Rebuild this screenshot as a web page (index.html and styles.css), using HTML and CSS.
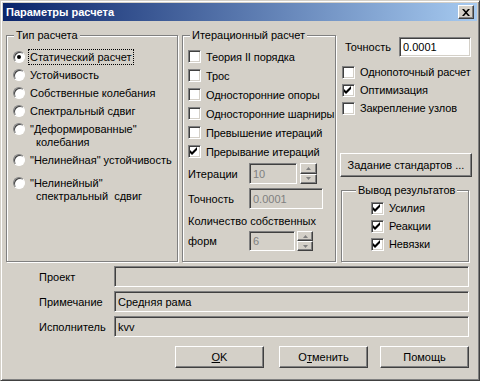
FILE: index.html
```html
<!DOCTYPE html>
<html lang="ru">
<head>
    <meta charset="UTF-8">
    <title>Параметры расчета</title>
    <link rel="stylesheet" href="styles.css">
</head>
<body>
    <div class="window">
        <div class="titlebar">
            <span class="title">Параметры расчета</span>
            <span class="close-btn">
                <svg width="8" height="7" viewBox="0 0 8 7"><path d="M0 0h2l2 2.3 2-2.3h2l-3 3.5 3 3.5h-2l-2-2.3-2 2.3h-2l3-3.5z" fill="#000"/></svg>
            </span>
        </div>
        <div class="content">
            <div class="top">
                <!-- Тип расчета -->
                <div class="group group-type">
                    <span class="group-title">Тип расчета</span>
                    <div class="opt"><span class="radio checked"></span><span class="focus">Статический расчет</span></div>
                    <div class="opt"><span class="radio"></span><span>Устойчивость</span></div>
                    <div class="opt"><span class="radio"></span><span>Собственные колебания</span></div>
                    <div class="opt"><span class="radio"></span><span>Спектральный сдвиг</span></div>
                    <div class="opt"><span class="radio"></span><span>"Деформированные"<span class="line2">колебания</span></span></div>
                    <div class="opt"><span class="radio"></span><span>"Нелинейная" устойчивость</span></div>
                    <div class="opt opt-last"><span class="radio"></span><span>"Нелинейный"<span class="line2">спектральный&nbsp; сдвиг</span></span></div>
                </div>

                <!-- Итерационный расчет -->
                <div class="group group-iter">
                    <span class="group-title">Итерационный расчет</span>
                    <div class="check-row"><span class="checkbox"></span>Теория II порядка</div>
                    <div class="check-row"><span class="checkbox"></span>Трос</div>
                    <div class="check-row"><span class="checkbox"></span>Односторонние опоры</div>
                    <div class="check-row"><span class="checkbox"></span>Односторонние шарниры</div>
                    <div class="check-row"><span class="checkbox"></span>Превышение итераций</div>
                    <div class="check-row"><span class="checkbox checked"><svg width="11" height="11" viewBox="0 0 11 11"><path d="M1 4l2 2 5-5v3l-5 5-2-2z" fill="#000"/></svg></span>Прерывание итераций</div>
                    <div class="num-row row-iter">
                        <span class="num-label">Итерации</span>
                        <span class="field disabled w-iter">10</span>
                        <span class="spinner">
                            <span class="spin-btn"><svg width="5" height="3" viewBox="0 0 5 3"><path d="M2.5 0l2.5 3h-5z" fill="#808080"/></svg></span>
                            <span class="spin-btn"><svg width="5" height="3" viewBox="0 0 5 3"><path d="M0 0h5l-2.5 3z" fill="#808080"/></svg></span>
                        </span>
                    </div>
                    <div class="num-row row-acc">
                        <span class="num-label">Точность</span>
                        <span class="field disabled w-acc">0.0001</span>
                    </div>
                    <div class="modes-label">Количество собственных</div>
                    <div class="num-row row-forms">
                        <span class="num-label">форм</span>
                        <span class="field disabled w-forms">6</span>
                        <span class="spinner spinner-sm">
                            <span class="spin-btn"><svg width="5" height="3" viewBox="0 0 5 3"><path d="M2.5 0l2.5 3h-5z" fill="#808080"/></svg></span>
                            <span class="spin-btn"><svg width="5" height="3" viewBox="0 0 5 3"><path d="M0 0h5l-2.5 3z" fill="#808080"/></svg></span>
                        </span>
                    </div>
                </div>

                <!-- правая колонка -->
                <div class="side">
                    <div class="acc-row">
                        <span class="acc-label">Точность</span>
                        <span class="field white w-side">0.0001</span>
                    </div>
                    <div class="side-checks">
                        <div class="check-row side-row"><span class="checkbox"></span>Однопоточный расчет</div>
                        <div class="check-row side-row"><span class="checkbox checked"><svg width="11" height="11" viewBox="0 0 11 11"><path d="M1 4l2 2 5-5v3l-5 5-2-2z" fill="#000"/></svg></span>Оптимизация</div>
                        <div class="check-row side-row"><span class="checkbox"></span>Закрепление узлов</div>
                    </div>
                    <div class="btn btn-std">Задание стандартов ...</div>
                    <div class="group group-out">
                        <span class="group-title">Вывод результатов</span>
                        <div class="check-row side-row"><span class="checkbox checked"><svg width="11" height="11" viewBox="0 0 11 11"><path d="M1 4l2 2 5-5v3l-5 5-2-2z" fill="#000"/></svg></span>Усилия</div>
                        <div class="check-row side-row"><span class="checkbox checked"><svg width="11" height="11" viewBox="0 0 11 11"><path d="M1 4l2 2 5-5v3l-5 5-2-2z" fill="#000"/></svg></span>Реакции</div>
                        <div class="check-row side-row"><span class="checkbox checked"><svg width="11" height="11" viewBox="0 0 11 11"><path d="M1 4l2 2 5-5v3l-5 5-2-2z" fill="#000"/></svg></span>Невязки</div>
                    </div>
                </div>
            </div>

            <div class="fields">
                <div class="field-row"><span class="field-label">Проект</span><span class="field wide"></span></div>
                <div class="field-row"><span class="field-label">Примечание</span><span class="field wide">Средняя рама</span></div>
                <div class="field-row"><span class="field-label">Исполнитель</span><span class="field wide">kvv</span></div>
            </div>

            <div class="actions">
                <div class="btn btn-ok"><u>O</u>K</div>
                <div class="btn">О<u>т</u>менить</div>
                <div class="btn">Помощь</div>
            </div>
        </div>
    </div>
</body>
</html>
```

FILE: styles.css
```css
body {
    margin: 0;
    font-family: "Liberation Sans", Arial, sans-serif;
    font-size: 11px;
    color: #000;
    background: #d4d0c8;
}
.window {
    box-sizing: border-box;
    width: 480px;
    height: 381px;
    padding: 2px;
    background: #d4d0c8;
    border: 1px solid;
    border-color: #d4d0c8 #404040 #404040 #d4d0c8;
    box-shadow: inset 1px 1px #fff, inset -1px -1px #808080;
}
.titlebar {
    height: 18px;
    display: flex;
    align-items: center;
    justify-content: space-between;
    padding-left: 3px;
    background: linear-gradient(to right, #0a246a, #a6caf0);
}
.title {
    color: #fff;
    font-weight: bold;
}
.close-btn {
    box-sizing: border-box;
    width: 16px;
    height: 14px;
    margin-right: 3px;
    display: flex;
    align-items: center;
    justify-content: center;
    background: #d4d0c8;
    border: 1px solid;
    border-color: #fff #404040 #404040 #fff;
    box-shadow: inset -1px -1px #808080;
}
.content {
    padding: 0 3px;
}

/* верхняя часть */
.top {
    display: flex;
    margin-top: 14px;
    height: 227px;
}
.group {
    position: relative;
    box-sizing: border-box;
    border: 1px solid #808080;
    box-shadow: inset 1px 1px #fff, 1px 1px #fff;
}
.group-title {
    position: absolute;
    top: -7px;
    left: 7px;
    padding: 0 2px;
    line-height: 13px;
    background: #d4d0c8;
}
.group-type {
    width: 172px;
    padding: 12px 0 0 6px;
}
.opt {
    display: flex;
    align-items: flex-start;
    padding: 2px 0;
    line-height: 14px;
}
.opt-last {
    margin-top: 5px;
}
.line2 {
    display: block;
    padding-left: 6px;
    line-height: 13px;
}
.radio {
    box-sizing: border-box;
    flex: none;
    width: 12px;
    height: 12px;
    margin: 1px 5px 0 0;
    border-radius: 50%;
    background: #fff;
    border: 1px solid;
    border-color: #808080 #fff #fff #808080;
    box-shadow: inset 1px 1px #404040;
    display: flex;
    align-items: center;
    justify-content: center;
}
.radio.checked::after {
    content: "";
    width: 4px;
    height: 4px;
    border-radius: 50%;
    background: #000;
}
.focus {
    outline: 1px dotted #000;
    outline-offset: 0;
    padding: 0 1px;
    margin-left: -1px;
}

.group-iter {
    width: 154px;
    margin-left: 4px;
    padding: 11px 0 0 5px;
}
.check-row {
    display: flex;
    align-items: center;
    height: 19px;
    white-space: nowrap;
    letter-spacing: -0.1px;
}
.checkbox {
    box-sizing: border-box;
    flex: none;
    width: 13px;
    height: 13px;
    margin-right: 5px;
    background: #fff;
    border: 1px solid;
    border-color: #808080 #fff #fff #808080;
    box-shadow: inset 1px 1px #404040, inset -1px -1px #d4d0c8;
    display: flex;
    align-items: center;
    justify-content: center;
}
.num-row {
    display: flex;
    align-items: center;
}
.row-iter {
    margin-top: 2px;
    height: 21px;
}
.row-acc {
    margin-top: 4px;
    height: 21px;
}
.row-forms {
    margin-top: 3px;
    height: 20px;
}
.num-label {
    width: 61px;
}
.modes-label {
    margin-top: 5px;
    line-height: 14px;
    white-space: nowrap;
}
.field {
    box-sizing: border-box;
    height: 100%;
    display: flex;
    align-items: center;
    padding-left: 3px;
    background: #d4d0c8;
    border: 1px solid;
    border-color: #808080 #fff #fff #808080;
    box-shadow: inset 1px 1px #404040, inset -1px -1px #d4d0c8;
    white-space: nowrap;
}
.field.disabled {
    color: #808080;
}
.field.white {
    background: #fff;
}
.w-iter {
    width: 48px;
}
.w-acc {
    width: 74px;
}
.w-forms {
    width: 46px;
}
.spinner {
    height: 100%;
    width: 17px;
    margin-left: 3px;
    display: flex;
    flex-direction: column;
}
.spinner-sm {
    width: 16px;
    margin-left: 2px;
}
.spin-btn {
    box-sizing: border-box;
    flex: 1;
    display: flex;
    align-items: center;
    justify-content: center;
    background: #d4d0c8;
    border: 1px solid;
    border-color: #fff #404040 #404040 #fff;
    box-shadow: inset -1px -1px #808080;
}

/* правая колонка */
.side {
    width: 132px;
    margin-left: 4px;
    display: flex;
    flex-direction: column;
}
.acc-row {
    display: flex;
    align-items: center;
    height: 20px;
    margin-top: 2px;
}
.acc-label {
    width: 54px;
    padding-left: 5px;
}
.w-side {
    width: 72px;
}
.side-checks {
    margin-top: 6px;
    padding-left: 2px;
}
.side-row {
    height: 18px;
}
.btn {
    box-sizing: border-box;
    display: flex;
    align-items: center;
    justify-content: center;
    background: #d4d0c8;
    border: 1px solid;
    border-color: #fff #404040 #404040 #fff;
    box-shadow: inset -1px -1px #808080;
    white-space: nowrap;
}
.btn-std {
    height: 24px;
    margin-top: 36px;
}
.group-out {
    flex: 1;
    width: 128px;
    margin: 13px 0 0 1px;
    padding: 8px 0 0 29px;
}
.group-out .group-title {
    left: 14px;
}

/* поля внизу */
.fields {
    margin-top: 4px;
    display: flex;
    flex-direction: column;
    gap: 4px;
}
.field-row {
    display: flex;
    align-items: center;
    height: 21px;
}
.field-label {
    width: 75px;
    margin-left: 33px;
}
.wide {
    width: 355px;
}

.actions {
    display: flex;
    justify-content: flex-end;
    gap: 12px;
    margin-top: 9px;
    padding-right: 5px;
}
.actions .btn {
    width: 89px;
    height: 22px;
}
.btn-ok {
    margin-right: 3px;
}
```
